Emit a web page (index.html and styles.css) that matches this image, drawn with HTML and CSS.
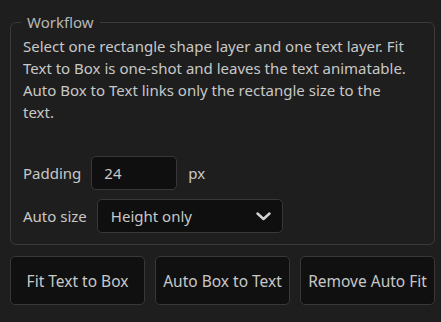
FILE: index.html
```html
<!DOCTYPE html>
<html>
<head>
    <meta charset="utf-8" />
    <title>Fit Text</title>
    <link rel="stylesheet" href="styles.css">
</head>
<body>
    <div id="panel">
        <fieldset class="group">
            <legend>Workflow</legend>
            <p class="help">Select one rectangle shape layer and one text layer. Fit Text to Box is one-shot and leaves the text animatable. Auto Box to Text links only the rectangle size to the<br>text.</p>
            <div class="row">
                <label for="padding">Padding</label>
                <input id="padding" class="field num" type="text" value="24">
                <span class="unit">px</span>
            </div>
            <div class="row">
                <label for="autosize">Auto size</label>
                <div class="field select" id="autosize">
                    <span>Height only</span>
                    <svg width="15" height="9" viewBox="0 0 15 9"><path d="M1.5 1.5 L7.5 7 L13.5 1.5" fill="none" stroke="#d4d4d4" stroke-width="2.4" stroke-linecap="round" stroke-linejoin="round"/></svg>
                </div>
            </div>
        </fieldset>
        <div class="actions">
            <button class="btn">Fit Text to Box</button>
            <button class="btn">Auto Box to Text</button>
            <button class="btn">Remove Auto Fit</button>
        </div>
    </div>
</body>
</html>
```

FILE: styles.css
```css
body{
    margin: 0;
    background-color: #1e1e1e;
    font-family: 'Noto Sans', sans-serif;
    font-size: 15px;
    color: #c8c8c8;
}
#panel{
    padding: 11px 6px 0 10px;
}
.group{
    margin: 0;
    padding: 0 12px 11px 12px;
    border: 1px solid #3a3a3a;
    border-radius: 6px;
}
.group legend{
    margin-left: -2px;
    padding: 0 6px;
    line-height: 22px;
    color: #b8b8b8;
}
.help{
    margin: 2px 0 33px 0;
    line-height: 22px;
}
.row{
    display: flex;
    align-items: center;
    gap: 10px;
    margin-top: 9px;
}
.row label{
    color: #c8c8c8;
}
.field{
    box-sizing: border-box;
    height: 34px;
    background-color: #0f0f0f;
    border: 1px solid #383838;
    border-radius: 5px;
    color: #c8c8c8;
    font-family: inherit;
    font-size: 15px;
}
.num{
    width: 86px;
    padding: 0 12px;
    outline: 0;
}
.unit{
    margin-left: 1px;
}
.select{
    width: 186px;
    padding: 0 11px 0 13px;
    display: flex;
    align-items: center;
    justify-content: space-between;
}
.actions{
    display: grid;
    grid-template-columns: 1fr 1fr 1fr;
    gap: 10px;
    margin-top: 11px;
}
.btn{
    height: 49px;
    background-color: #101010;
    border: 1px solid #383838;
    border-radius: 5px;
    color: #c8c8c8;
    font-family: inherit;
    font-size: 15.5px;
    padding: 0;
    cursor: pointer;
}
```
